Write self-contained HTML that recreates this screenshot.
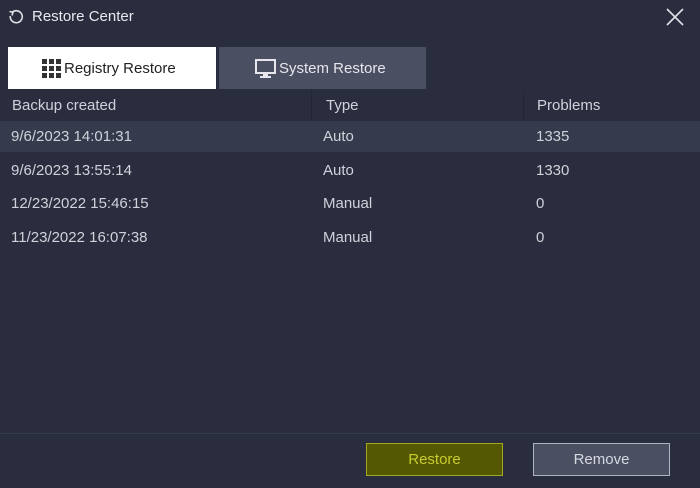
<!DOCTYPE html><html><head><style>
body{margin:0;width:700px;height:488px;background:#292d3e;font-family:"Liberation Sans",sans-serif;color:#d0d2da;position:relative;overflow:hidden;font-size:15px}
.a{position:absolute}
</style></head><body>
<svg class="a" style="left:8px;top:9px" width="16" height="16" viewBox="0 0 16 16"><path d="M4 3.5A6 6 0 1 1 2.3 7" fill="none" stroke="#e0e0e6" stroke-width="1.6"/><path d="M1.5 2.5L5 3.2 4 6.5" fill="none" stroke="#e0e0e6" stroke-width="1.6"/></svg>
<div class="a" style="left:32px;top:8px;font-size:15px;color:#e8e8ee">Restore Center</div>
<svg class="a" style="left:666px;top:8px" width="18" height="18"><path d="M1 1L17 17M17 1L1 17" stroke="#e0e0e6" stroke-width="1.6"/></svg>
<div class="a" style="left:8px;top:47px;width:208px;height:42px;background:#fff"></div>
<svg class="a" style="left:42px;top:59px" width="20" height="20"><g fill="#333">
<rect x="0" y="0" width="5" height="5"/><rect x="7" y="0" width="5" height="5"/><rect x="14" y="0" width="5" height="5"/>
<rect x="0" y="7" width="5" height="5"/><rect x="7" y="7" width="5" height="5"/><rect x="14" y="7" width="5" height="5"/>
<rect x="0" y="14" width="5" height="5"/><rect x="7" y="14" width="5" height="5"/><rect x="14" y="14" width="5" height="5"/></g></svg>
<div class="a" style="left:64px;top:60px;color:#222;font-size:15px">Registry Restore</div>
<div class="a" style="left:219px;top:47px;width:207px;height:42px;background:#4a4f62"></div>
<svg class="a" style="left:255px;top:59px" width="22" height="20"><rect x="1" y="1" width="19" height="13" fill="none" stroke="#e6e6ec" stroke-width="2"/><rect x="8" y="14" width="5" height="3" fill="#e6e6ec"/><rect x="5" y="17" width="11" height="2" fill="#e6e6ec"/></svg>
<div class="a" style="left:279px;top:60px;color:#e6e6ec;font-size:15px">System Restore</div>
<div class="a" style="left:311px;top:90px;width:1px;height:30px;background:#232636"></div>
<div class="a" style="left:523px;top:90px;width:1px;height:30px;background:#232636"></div>
<div class="a" style="left:12px;top:97px">Backup created</div>
<div class="a" style="left:326px;top:97px">Type</div>
<div class="a" style="left:537px;top:97px">Problems</div>
<div class="a" style="left:0;top:121px;width:700px;height:31px;background:#353a4d"></div>
<div class="a" style="left:11px;top:128px">9/6/2023 14:01:31</div><div class="a" style="left:323px;top:128px">Auto</div><div class="a" style="left:536px;top:128px">1335</div>
<div class="a" style="left:11px;top:162px">9/6/2023 13:55:14</div><div class="a" style="left:323px;top:162px">Auto</div><div class="a" style="left:536px;top:162px">1330</div>
<div class="a" style="left:11px;top:195px">12/23/2022 15:46:15</div><div class="a" style="left:323px;top:195px">Manual</div><div class="a" style="left:536px;top:195px">0</div>
<div class="a" style="left:11px;top:229px">11/23/2022 16:07:38</div><div class="a" style="left:323px;top:229px">Manual</div><div class="a" style="left:536px;top:229px">0</div>
<div class="a" style="left:0;top:433px;width:700px;height:1px;background:#353a4c"></div>
<div class="a" style="left:366px;top:443px;width:135px;height:31px;background:#545800;border:1.5px solid #a3a820;color:#c8cc30;text-align:center;line-height:31px">Restore</div>
<div class="a" style="left:533px;top:443px;width:135px;height:31px;background:#4a4f62;border:1.5px solid #b0b3c0;color:#d6d8e0;text-align:center;line-height:31px">Remove</div>
</body></html>
